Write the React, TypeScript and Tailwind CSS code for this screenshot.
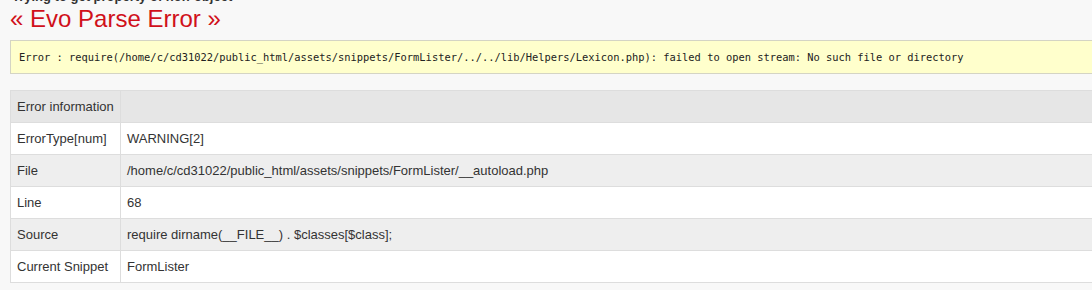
import React from "react";

const rows: { label: string; value: string; shade: boolean }[] = [
  { label: "ErrorType[num]", value: "WARNING[2]", shade: false },
  { label: "File", value: "/home/c/cd31022/public_html/assets/snippets/FormLister/__autoload.php", shade: true },
  { label: "Line", value: "68", shade: false },
  { label: "Source", value: "require dirname(__FILE__) . $classes[$class];", shade: true },
  { label: "Current Snippet", value: "FormLister", shade: false },
];

export default function App() {
  return (
    <div
      className="w-[1092px] h-[290px] overflow-hidden bg-[#f8f8f8] text-[#333333]"
      style={{ fontFamily: '"Liberation Sans", Arial, sans-serif' }}
    >
      <div className="w-[1200px] pl-[10px]">
        <div className="-mt-[11px] pl-[2px] text-[13px] leading-[15px] font-bold text-[#333333] whitespace-nowrap">
          Trying to get property of non-object
        </div>
        <h1 className="mt-[1px] text-[24px] leading-[28px] font-normal text-[#d0101a] whitespace-nowrap">
          « Evo Parse Error »
        </h1>
        <div
          className="mt-[7px] h-[34px] border border-[#d4d4c4] bg-[#ffffcc] pl-[8px] pt-[10px] text-[10.4px] leading-[13px] text-[#222222] whitespace-nowrap"
          style={{ fontFamily: '"DejaVu Sans Mono", "Liberation Mono", monospace' }}
        >
          Error : require(/home/c/cd31022/public_html/assets/snippets/FormLister/../../lib/Helpers/Lexicon.php): failed to open stream: No such file or directory
        </div>
        <table className="mt-[16px] w-full border-collapse text-[13px] leading-[19px]">
          <tbody>
            <tr className="bg-[#e6e6e6]">
              <td className="w-[110px] h-[32px] border border-[#dddddd] px-[6px] whitespace-nowrap">
                Error information
              </td>
              <td className="h-[32px] border border-[#dddddd] px-[6px]"></td>
            </tr>
            {rows.map((r) => (
              <tr key={r.label} className={r.shade ? "bg-[#eeeeee]" : "bg-white"}>
                <td className="w-[110px] h-[32px] border border-[#dddddd] px-[6px] whitespace-nowrap">
                  {r.label}
                </td>
                <td className="h-[32px] border border-[#dddddd] px-[6px] whitespace-nowrap">{r.value}</td>
              </tr>
            ))}
          </tbody>
        </table>
      </div>
    </div>
  );
}
